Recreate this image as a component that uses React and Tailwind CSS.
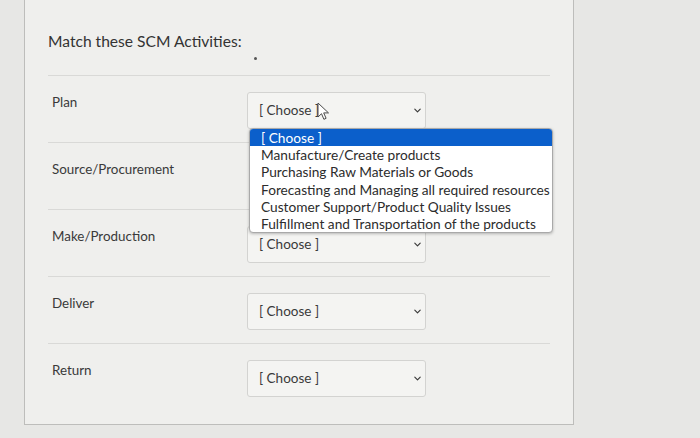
import React from "react";

const rows = [
  { label: "Plan", open: true },
  { label: "Source/Procurement", hidden: true },
  { label: "Make/Production" },
  { label: "Deliver" },
  { label: "Return" },
];

const options = [
  "[ Choose ]",
  "Manufacture/Create products",
  "Purchasing Raw Materials or Goods",
  "Forecasting and Managing all required resources",
  "Customer Support/Product Quality Issues",
  "Fulfillment and Transportation of the products",
];

function Chevron() {
  return (
    <svg viewBox="0 0 10 10" width="9" height="9" aria-hidden="true">
      <path d="M2 3.5 5 6.5 8 3.5" fill="none" stroke="#3a3a3a" strokeWidth="1.3" strokeLinecap="round" strokeLinejoin="round" />
    </svg>
  );
}

function Cursor() {
  return (
    <svg className="absolute left-[317px] top-[102px]" width="13" height="19" viewBox="0 0 13 19" aria-hidden="true">
      <path d="M1 1v14l3.5-3.3 2.4 5.6 2.2-1-2.4-5.4H11.5Z" fill="#fff" stroke="#4a4a4a" strokeWidth="1" strokeLinejoin="round" />
    </svg>
  );
}

function Select({ hidden }) {
  return (
    <div
      className={
        "mt-[16px] w-[179px] h-[37px] rounded-[3px] border border-[#d3d3d1] bg-[#f4f4f2] flex items-center justify-between pl-[11px] pr-[3px] " +
        (hidden ? "invisible" : "")
      }>
      <span className="text-[13.5px] text-[#3a3a3a]">[ Choose ]</span>
      <Chevron />
    </div>
  );
}

export default function App() {
  return (
    <div
      className="relative w-[700px] h-[438px] overflow-hidden bg-[#e7e7e5] text-[#383838]"
      style={{ fontFamily: "Lato, 'Open Sans', sans-serif" }}>
      <div className="ml-[24px] w-[550px] h-[425px] bg-[#efefed] border-l border-r border-b border-[#bdbdbb] px-[23px]">
        <h2 className="pt-[31px] h-[75px] text-[15.6px] text-[#333] leading-[20px] relative">
          Match these SCM Activities:
          <span className="absolute left-[206px] top-[57px] w-[3px] h-[3px] rounded-full bg-[#555]" />
        </h2>
        {rows.map((row) => (
          <div key={row.label} className="h-[67px] border-t border-[#d9d9d7] flex">
            <div className="w-[199px] pl-[4px] pt-[18px] text-[13.4px] leading-[16px] text-[#3a3a3a]">
              {row.label}
            </div>
            <Select hidden={row.hidden} />
          </div>
        ))}
      </div>

      {/* open dropdown */}
      <div className="absolute left-[249px] top-[128px] w-[304px] rounded-[4px] border border-[#a9a9a9] bg-white shadow-[0_1px_3px_rgba(0,0,0,0.25)] overflow-hidden text-[13.7px] leading-[17.2px] text-[#2c2c2c]">
        {options.map((opt, i) => (
          <div
            key={opt}
            className={
              "pl-[11px] whitespace-nowrap " +
              (i === 0 ? "bg-[#0b5fcb] text-white" : "")
            }>
            {opt}
          </div>
        ))}
      </div>

      <Cursor />
    </div>
  );
}
